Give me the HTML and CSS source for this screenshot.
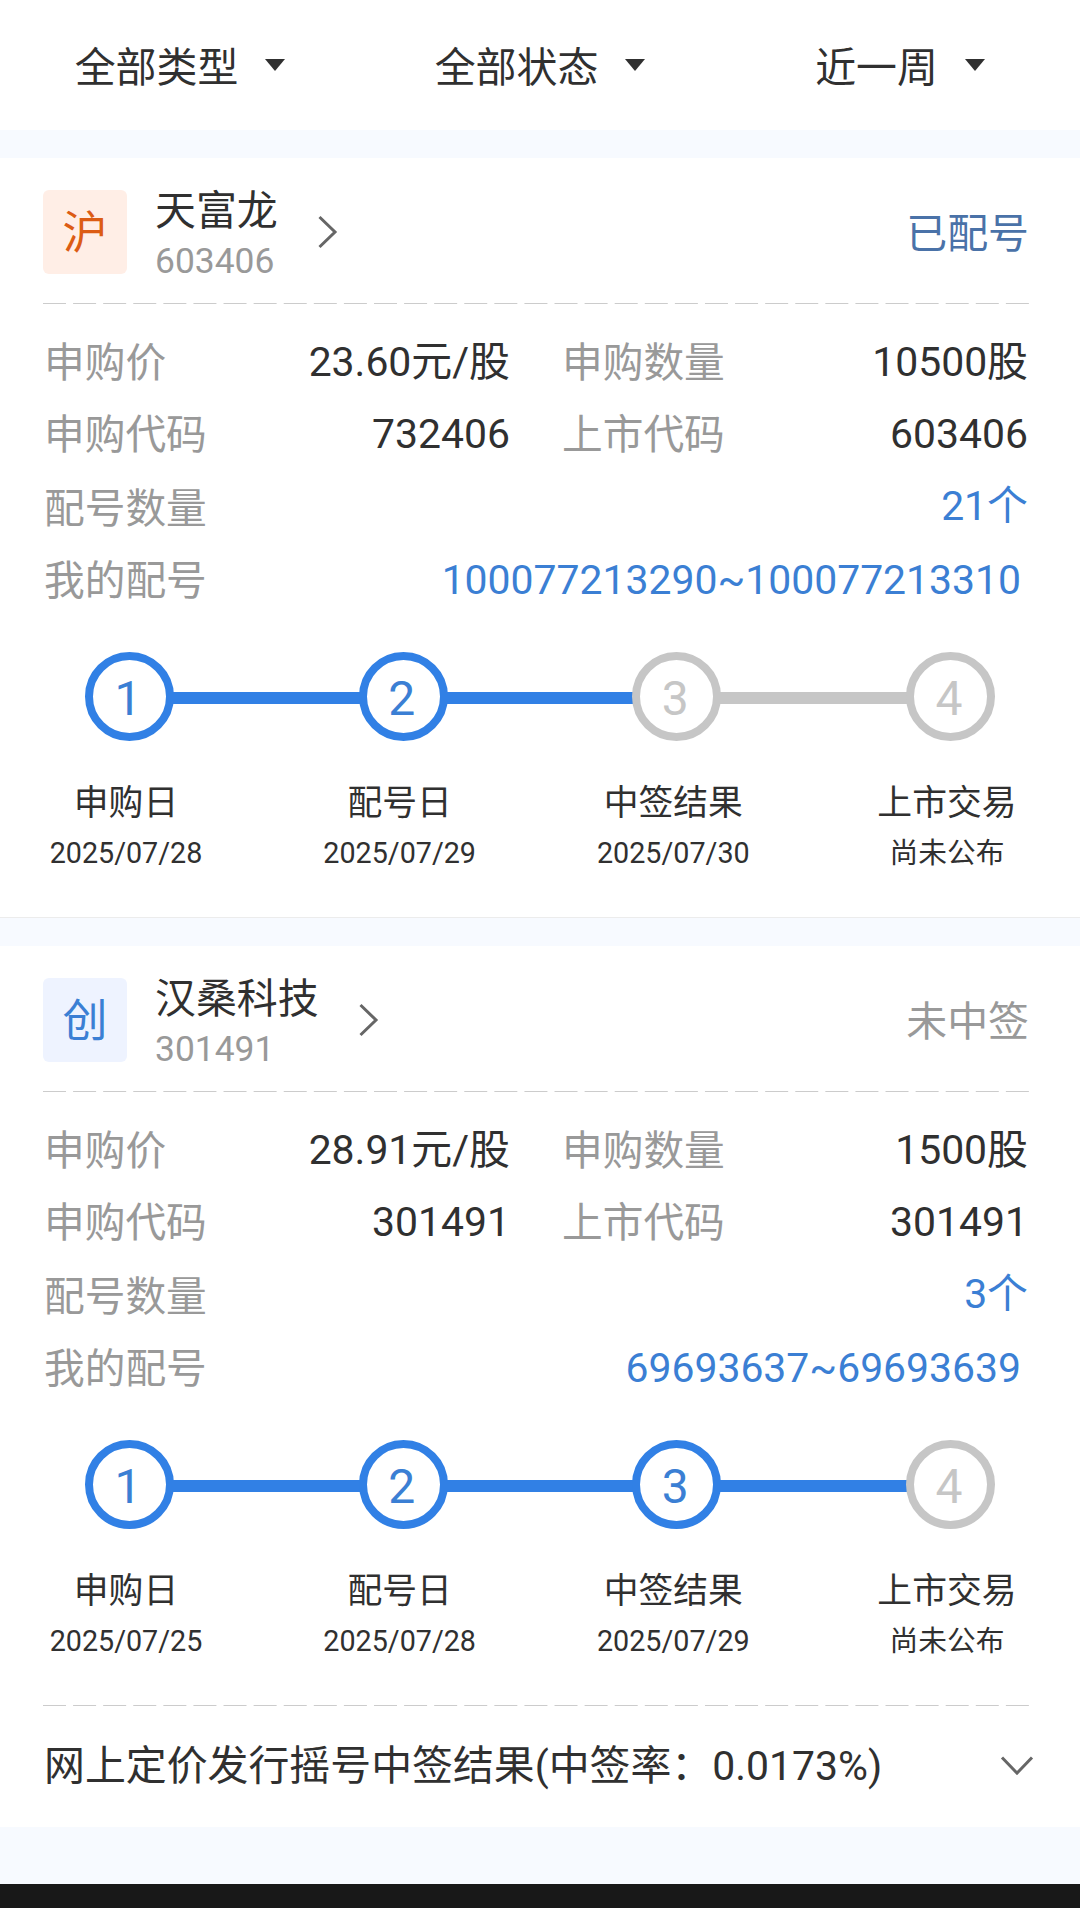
FILE: index.html
```
<!DOCTYPE html>
<html lang="zh-CN">
<head>
    <meta charset="UTF-8">
    <meta name="viewport" content="width=device-width, initial-scale=1.0">
    <title>新股申购</title>
    <link rel="stylesheet" href="styles.css">
</head>
<body>
    <div class="filters">
        <div class="filter"><span>全部类型</span><i class="caret"></i></div>
        <div class="filter"><span>全部状态</span><i class="caret"></i></div>
        <div class="filter"><span>近一周</span><i class="caret"></i></div>
    </div>

    <div class="card">
        <div class="card-head">
            <div class="market market-sh">沪</div>
            <div class="stock">
                <div class="stock-name">天富龙</div>
                <div class="stock-code">603406</div>
            </div>
            <svg class="arrow" width="20" height="34" viewBox="0 0 20 34"><path d="M1.5 2L17 17L1.5 32"/></svg>
            <div class="status status-active">已配号</div>
        </div>
        <svg class="dash" width="986" height="2"><line x1="0" y1="0.5" x2="986" y2="0.5"/></svg>
        <div class="info">
            <div class="row">
                <div class="cell"><span class="label">申购价</span><span class="value">23.60元/股</span></div>
                <div class="cell"><span class="label">申购数量</span><span class="value">10500股</span></div>
            </div>
            <div class="row">
                <div class="cell"><span class="label">申购代码</span><span class="value">732406</span></div>
                <div class="cell"><span class="label">上市代码</span><span class="value">603406</span></div>
            </div>
            <div class="row row-count"><span class="label">配号数量</span><span class="value link">21个</span></div>
            <div class="row row-numbers"><span class="label">我的配号</span><span class="value link">100077213290~100077213310</span></div>
        </div>
        <div class="steps">
            <div class="step done">1</div>
            <div class="line done"></div>
            <div class="step done">2</div>
            <div class="line done"></div>
            <div class="step">3</div>
            <div class="line"></div>
            <div class="step">4</div>
        </div>
        <div class="step-texts">
            <div class="step-text"><p>申购日</p><small>2025/07/28</small></div>
            <div class="step-text"><p>配号日</p><small>2025/07/29</small></div>
            <div class="step-text"><p>中签结果</p><small>2025/07/30</small></div>
            <div class="step-text"><p>上市交易</p><small>尚未公布</small></div>
        </div>
    </div>

    <div class="card">
        <div class="card-head">
            <div class="market market-cy">创</div>
            <div class="stock">
                <div class="stock-name">汉桑科技</div>
                <div class="stock-code">301491</div>
            </div>
            <svg class="arrow" width="20" height="34" viewBox="0 0 20 34"><path d="M1.5 2L17 17L1.5 32"/></svg>
            <div class="status">未中签</div>
        </div>
        <svg class="dash" width="986" height="2"><line x1="0" y1="0.5" x2="986" y2="0.5"/></svg>
        <div class="info">
            <div class="row">
                <div class="cell"><span class="label">申购价</span><span class="value">28.91元/股</span></div>
                <div class="cell"><span class="label">申购数量</span><span class="value">1500股</span></div>
            </div>
            <div class="row">
                <div class="cell"><span class="label">申购代码</span><span class="value">301491</span></div>
                <div class="cell"><span class="label">上市代码</span><span class="value">301491</span></div>
            </div>
            <div class="row row-count"><span class="label">配号数量</span><span class="value link">3个</span></div>
            <div class="row row-numbers"><span class="label">我的配号</span><span class="value link">69693637~69693639</span></div>
        </div>
        <div class="steps">
            <div class="step done">1</div>
            <div class="line done"></div>
            <div class="step done">2</div>
            <div class="line done"></div>
            <div class="step done">3</div>
            <div class="line done"></div>
            <div class="step">4</div>
        </div>
        <div class="step-texts">
            <div class="step-text"><p>申购日</p><small>2025/07/25</small></div>
            <div class="step-text"><p>配号日</p><small>2025/07/28</small></div>
            <div class="step-text"><p>中签结果</p><small>2025/07/29</small></div>
            <div class="step-text"><p>上市交易</p><small>尚未公布</small></div>
        </div>
        <svg class="dash" width="986" height="2"><line x1="0" y1="0.5" x2="986" y2="0.5"/></svg>
        <div class="result">
            <span>网上定价发行摇号中签结果(中签率：0.0173%)</span>
            <svg class="arrow-down" width="34" height="20" viewBox="0 0 34 20"><path d="M2 1.5L17 17L32 1.5"/></svg>
        </div>
    </div>

    <div class="bottom-bar"></div>
</body>
</html>
```
FILE: styles.css
```
* {
    box-sizing: border-box;
}
body {
    margin: 0;
    height: 1908px;
    display: flex;
    flex-direction: column;
    overflow: hidden;
    background-color: #f7faff;
    color: #303030;
    font-family: Roboto, "Noto Sans CJK SC", sans-serif;
    font-size: 40.9px;
    line-height: 60px;
}
.filters {
    display: grid;
    grid-template-columns: repeat(3, 1fr);
    height: 130px;
    background-color: #fff;
}
.filter {
    display: flex;
    align-items: center;
    justify-content: center;
}
.filter span {
    padding-top: 5px;
}
.caret {
    margin-left: 27px;
    border: 10px solid transparent;
    border-top: 12px solid #303030;
    border-bottom: none;
}

/* card */
.card {
    margin-top: 28px;
    height: 760px;
    background-color: #fff;
    border-bottom: 1px solid #ececec;
}
.card + .card {
    height: 881px;
    border-bottom: none;
}
.card-head {
    display: flex;
    align-items: center;
    height: 145px;
    padding: 2px 51px 0 43px;
}
.market {
    width: 84px;
    height: 84px;
    border-radius: 6px;
    font-size: 45px;
    line-height: 87px;
    text-align: center;
}
.market-sh {
    background-color: #ffeee6;
    color: #dc5c14;
}
.market-cy {
    background-color: #eef3ff;
    color: #3b7fd4;
}
.stock {
    margin-left: 28px;
    padding-top: 8px;
}
.stock-name {
    line-height: 50px;
}
.stock-code {
    color: #999;
    font-size: 35.4px;
    line-height: 50px;
}
.arrow {
    margin-left: 40px;
}
.arrow path,
.arrow-down path {
    fill: none;
    stroke: #666;
    stroke-width: 3;
}
.status {
    margin-left: auto;
    padding-top: 4px;
    color: #999;
}
.status-active {
    color: #4a72a8;
}
.dash {
    display: block;
    margin-left: 43px;
}
.dash line {
    stroke: #ccc;
    stroke-width: 1;
    stroke-dasharray: 23 7.09;
}

/* info rows */
.info {
    padding: 21px 52px 0 44px;
}
.row {
    display: flex;
    justify-content: space-between;
    height: 72px;
    line-height: 72px;
}
.cell {
    display: flex;
    justify-content: space-between;
    width: 466px;
}
.label {
    padding-top: 1px;
    color: #999;
    font-size: 40.7px;
}
.link {
    color: #3b7fd4;
}
.row-count {
    height: 74px;
}
.row-count .label {
    line-height: 76px;
}
.row-numbers {
    padding-right: 7px;
}

/* progress */
.steps {
    display: flex;
    align-items: center;
    margin-top: 36px;
    padding: 0 85px;
}
.step {
    width: 89px;
    height: 89px;
    border: 8.5px solid #c6c6c6;
    border-radius: 50%;
    color: #c6c6c6;
    font-size: 48px;
    line-height: 78px;
    text-align: center;
    text-indent: -3px;
}
.step.done {
    border-color: #3180e5;
    color: #3b7fd4;
}
.line {
    flex: 1;
    height: 12px;
    margin: 3px -2px 0;
    background-color: #c6c6c6;
}
.line.done {
    background-color: #3180e5;
}
.step-texts {
    display: flex;
    justify-content: space-between;
    margin-top: 37px;
    padding: 0 53px 0 46px;
}
.step-text {
    width: 160px;
    text-align: center;
}
.step-text p {
    margin: 0;
    font-size: 34.8px;
    line-height: 50px;
}
.step-text small {
    display: block;
    font-size: 28.7px;
    line-height: 50px;
}
.step-texts + .dash {
    margin-top: 39px;
}
.result {
    display: flex;
    align-items: center;
    justify-content: space-between;
    height: 118px;
    padding: 0 46px 0 44px;
}

.bottom-bar {
    height: 24px;
    margin-top: auto;
    background-color: #181818;
}
```
